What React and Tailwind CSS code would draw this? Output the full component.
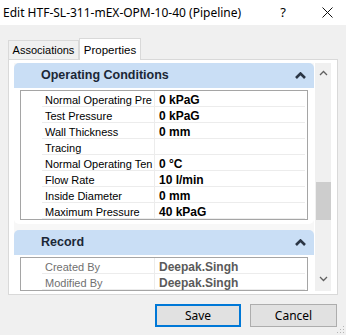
import React from 'react'

const opRows = [
  ['Normal Operating Pre', '0 kPaG'],
  ['Test Pressure', '0 kPaG'],
  ['Wall Thickness', '0 mm'],
  ['Tracing', ''],
  ['Normal Operating Ten', '0 °C'],
  ['Flow Rate', '10 l/min'],
  ['Inside Diameter', '0 mm'],
  ['Maximum Pressure', '40 kPaG'],
]

const recRows = [
  ['Created By', 'Deepak.Singh'],
  ['Modified By', 'Deepak.Singh'],
]

function Caret() {
  return (
    <svg width="11" height="7" viewBox="0 0 11 7">
      <path d="M1 6 L5.5 1.5 L10 6" fill="none" stroke="#2b3645" strokeWidth="2.6" strokeLinejoin="miter" />
    </svg>
  )
}

function Group({ title, rows, muted }) {
  return (
    <div className="flex flex-col shrink-0">
      <div className="h-[25px] bg-[#c9def5] rounded-t-[5px] flex items-center justify-between pl-[27px] pr-[8px]">
        <span className="text-[12.5px] font-bold text-[#1b2736]">{title}</span>
        <Caret />
      </div>
      <div className="bg-white rounded-b-[5px] pt-[2px] pb-[4px] px-[6px]">
        <div className="border border-[#a5a5a5]">
          {rows.map(([label, value]) => (
            <div key={label} className="h-[16px] flex pl-[21px]">
              <div className={`w-[113px] pl-[3px] pt-[3px] border-b border-r border-[#ececec] text-[11px] leading-[12px] whitespace-nowrap overflow-hidden ${muted ? 'text-[#707070]' : 'text-black'}`}>{label}</div>
              <div className={`flex-1 pl-[4px] pt-[3px] mr-[2px] border-b border-[#ececec] text-[12px] leading-[12px] font-bold whitespace-nowrap ${muted ? 'text-[#5a5a5a]' : 'text-black'}`}>{value}</div>
            </div>
          ))}
        </div>
      </div>
    </div>
  )
}

export default function App() {
  return (
    <div className="w-[346px] h-[335px] bg-[#f0f0f0] flex flex-col overflow-hidden relative" style={{ fontFamily: '"Liberation Sans", Arial, sans-serif' }}>
      <div className="h-[25px] bg-white flex items-center pl-[3px] shrink-0">
        <span className="text-[12px] text-black whitespace-nowrap" style={{ fontFamily: '"Noto Sans", sans-serif' }}>Edit HTF-SL-311-mEX-OPM-10-40 (Pipeline)</span>
        <span className="ml-auto text-[13px] text-black" style={{ fontFamily: '"Noto Sans", sans-serif' }}>?</span>
        <svg className="ml-[36px] mr-[13px]" width="11" height="11" viewBox="0 0 11 11">
          <path d="M0.5 0.5 L10.5 10.5 M10.5 0.5 L0.5 10.5" stroke="#111" strokeWidth="1" />
        </svg>
      </div>

      <div className="flex items-end pl-[8px] mt-[12px] h-[22px] relative z-10 shrink-0">
        <div className="h-[19px] w-[71px] border border-b-0 border-[#d9d9d9] bg-[#f0f0f0] flex items-center justify-center text-[11px] text-black">Associations</div>
        <div className="h-[22px] w-[62px] -mb-[1px] border border-b-0 border-[#d9d9d9] bg-white flex items-start pt-[3px] justify-center text-[11.5px] text-black">Properties</div>
      </div>

      <div className="ml-[8px] w-[330px] h-[236px] border border-[#d9d9d9] bg-white flex pt-[3px] pl-[5px] pr-[6px] pb-[3px] shrink-0">
        <div className="w-[300px] overflow-hidden flex flex-col gap-[6px] bg-[#f7f7f7]">
          <Group title="Operating Conditions" rows={opRows} />
          <Group title="Record" rows={recRows} muted />
        </div>
        <div className="w-[16px] ml-[1px] bg-[#f0f0f0] flex flex-col items-center">
          <svg className="mt-[7px]" width="9" height="6" viewBox="0 0 9 6">
            <path d="M1 5 L4.5 1.5 L8 5" fill="none" stroke="#606060" strokeWidth="1.3" />
          </svg>
          <div className="mt-[106px] w-[15px] h-[38px] bg-[#cdcdcd]" />
          <svg className="mt-auto mb-[9px]" width="9" height="6" viewBox="0 0 9 6">
            <path d="M1 1 L4.5 4.5 L8 1" fill="none" stroke="#606060" strokeWidth="1.3" />
          </svg>
        </div>
      </div>

      <div className="flex justify-end gap-[9px] pr-[9px] mt-[9px]">
        <button className="w-[86px] h-[23px] bg-[#e1e1e1] border-2 border-[#0078d7] text-[12px] text-black" style={{ fontFamily: '"Noto Sans", sans-serif' }}>Save</button>
        <button className="w-[87px] h-[23px] bg-[#e1e1e1] border border-[#adadad] text-[12px] text-black" style={{ fontFamily: '"Noto Sans", sans-serif' }}>Cancel</button>
      </div>

      <svg className="absolute right-[1px] bottom-[1px]" width="10" height="10" viewBox="0 0 10 10">
        <rect x="8" y="2" width="1" height="1" fill="#b5b5b5" />
        <rect x="5" y="5" width="1" height="1" fill="#b5b5b5" />
        <rect x="8" y="5" width="1" height="1" fill="#b5b5b5" />
        <rect x="2" y="8" width="1" height="1" fill="#b5b5b5" />
        <rect x="5" y="8" width="1" height="1" fill="#b5b5b5" />
        <rect x="8" y="8" width="1" height="1" fill="#b5b5b5" />
      </svg>
    </div>
  )
}
